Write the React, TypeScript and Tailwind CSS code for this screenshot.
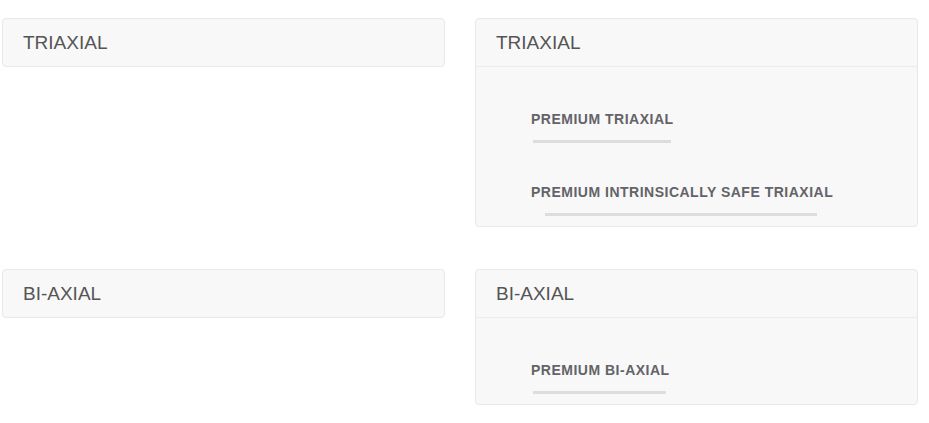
const groups = [
  {
    title: 'TRIAXIAL',
    items: [
      { label: 'PREMIUM TRIAXIAL', bar: 'ml-[2px] w-[138px]' },
      { label: 'PREMIUM INTRINSICALLY SAFE TRIAXIAL', bar: 'ml-[14px] w-[272px]' },
    ],
  },
  {
    title: 'BI-AXIAL',
    items: [{ label: 'PREMIUM BI-AXIAL', bar: 'ml-[2px] w-[133px]' }],
  },
]

const PanelHeading = ({ title }: { title: string }) => (
  <div className="flex h-[47px] items-center px-5 text-[19px] leading-none text-[#555]">
    {title}
  </div>
)

const App = () => {
  return (
    <div
      className="min-h-screen bg-white pt-[18px] pl-[2px]"
      style={{ fontFamily: '"Liberation Sans", Arial, sans-serif' }}
    >
      {groups.map((group) => (
        <div key={group.title} className="mb-[42px] flex items-start gap-[30px]">
          <div className="w-[443px] rounded border border-[#e8e8e8] bg-[#f8f8f8]">
            <PanelHeading title={group.title} />
          </div>
          <div className="w-[443px] rounded border border-[#e8e8e8] bg-[#f8f8f8]">
            <div className="border-b border-[#ececec]">
              <PanelHeading title={group.title} />
            </div>
            <ul className="flex flex-col gap-[39px] pt-[42px] pb-[10px] pl-[55px]">
              {group.items.map((item) => (
                <li key={item.label} className="flex flex-col items-start">
                  <span className="text-[14px] leading-[20px] font-bold tracking-[0.5px] text-[#636368]">
                    {item.label}
                  </span>
                  <span className={`mt-[11px] h-[3px] bg-[#dddddd] ${item.bar}`} />
                </li>
              ))}
            </ul>
          </div>
        </div>
      ))}
    </div>
  )
}

export default App
